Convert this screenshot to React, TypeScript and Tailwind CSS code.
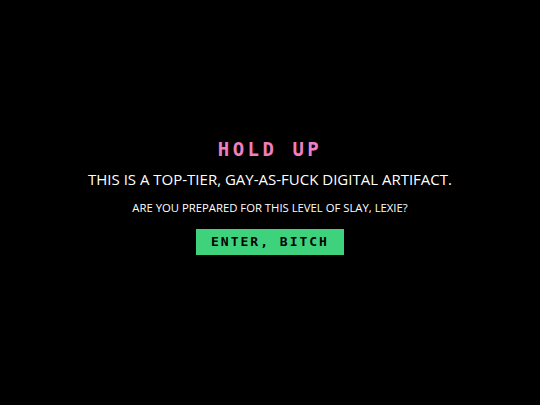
export default function App() {
  return (
    <div className="flex min-h-screen flex-col items-center justify-center bg-black pb-[10px] text-center">
      <h1 className="font-['DejaVu_Sans_Mono',monospace] text-[19px] font-bold leading-none tracking-[3.5px] text-[#ef7fc0]">
        HOLD UP
      </h1>
      <p className="mt-[13px] font-['Open_Sans','Liberation_Sans',sans-serif] text-[15px] leading-none text-white">
        THIS IS A TOP-TIER, GAY-AS-FUCK DIGITAL ARTIFACT.
      </p>
      <p className="mt-[15px] font-['Open_Sans','Liberation_Sans',sans-serif] text-[11.3px] leading-none text-white">
        ARE YOU PREPARED FOR THIS LEVEL OF SLAY, LEXIE?
      </p>
      <button className="mt-[15px] h-[26px] w-[148px] bg-[#3fd27d] font-['DejaVu_Sans_Mono',monospace] text-[13px] font-extrabold tracking-[2px] text-black">
        ENTER, BITCH
      </button>
    </div>
  );
}
